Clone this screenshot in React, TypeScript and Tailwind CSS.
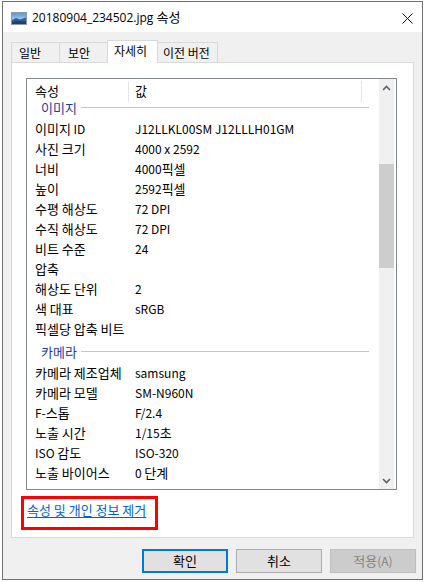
import React from "react";

const FONT = '"Noto Sans CJK KR", sans-serif';

function K({ t }: { t: string }) {
  const parts = t.split(/([\u3131-\u318E\uAC00-\uD7A3]+(?: [\u3131-\u318E\uAC00-\uD7A3]+)*)/);
  return (
    <>
      {parts.map((p, i) =>
        /[\uAC00-\uD7A3\u3131-\u318E]/.test(p) ? (
          <span key={i} className="text-[13px]">
            {p}
          </span>
        ) : (
          <span key={i}>{p}</span>
        )
      )}
    </>
  );
}

type Row = { k: string; v?: string } | { group: string };

const rows: Row[] = [
  { k: "이미지 ID", v: "J12LLKL00SM J12LLLH01GM" },
  { k: "사진 크기", v: "4000 x 2592" },
  { k: "너비", v: "4000픽셀" },
  { k: "높이", v: "2592픽셀" },
  { k: "수평 해상도", v: "72 DPI" },
  { k: "수직 해상도", v: "72 DPI" },
  { k: "비트 수준", v: "24" },
  { k: "압축", v: "" },
  { k: "해상도 단위", v: "2" },
  { k: "색 대표", v: "sRGB" },
  { k: "픽셀당 압축 비트", v: "" },
  { group: "카메라" },
  { k: "카메라 제조업체", v: "samsung" },
  { k: "카메라 모델", v: "SM-N960N" },
  { k: "F-스톱", v: "F/2.4" },
  { k: "노출 시간", v: "1/15초" },
  { k: "ISO 감도", v: "ISO-320" },
  { k: "노출 바이어스", v: "0 단계" },
];

function PhotoIcon() {
  return (
    <svg width="16" height="13" viewBox="0 0 16 13">
      <defs>
        <linearGradient id="sky" x1="0" y1="0" x2="0" y2="1">
          <stop offset="0" stopColor="#4a8fd0" />
          <stop offset="0.6" stopColor="#a9d0ef" />
          <stop offset="1" stopColor="#dfeefa" />
        </linearGradient>
      </defs>
      <rect x="0.5" y="0.5" width="15" height="12" fill="url(#sky)" stroke="#8d9aa8" />
      <path d="M1 8 L5 6 L9 7.5 L15 5.5 L15 12 L1 12 Z" fill="#2e5f96" />
      <path d="M1 10 L6 9 L15 9.5 L15 12 L1 12 Z" fill="#1d3f6e" />
      <rect x="1" y="1" width="14" height="2" fill="#6aa6dc" opacity="0.6" />
    </svg>
  );
}

function Chevron({ up }: { up?: boolean }) {
  return (
    <svg width="9" height="6" viewBox="0 0 9 6">
      <path
        d={up ? "M1 5 L4.5 1.5 L8 5" : "M1 1 L4.5 4.5 L8 1"}
        fill="none"
        stroke="#606060"
        strokeWidth="1.6"
      />
    </svg>
  );
}

export default function App() {
  return (
    <div
      className="w-[424px] h-[582px] bg-white pl-[2px] pt-[1px] overflow-hidden text-[12px] text-black"
      style={{ fontFamily: FONT }}
    >
      <div className="w-[421px] h-[579px] border border-[#6f6f6f] bg-[#f0f0f0] flex flex-col">
        {/* title bar */}
        <div className="h-[30px] bg-white flex items-center shrink-0">
          <div className="ml-[8px] mt-[2px] flex items-center">
            <PhotoIcon />
          </div>
          <div
            className="ml-[5px] text-[12px] leading-[16px]"
            style={{ fontFamily: '"Open Sans", "Noto Sans CJK KR", sans-serif' }}
          >
            20180904_234502.jpg <K t="속성" />
          </div>
          <div className="flex-1" />
          <div className="mr-[9px] mt-[2px]">
            <svg width="11" height="11" viewBox="0 0 11 11">
              <path d="M0.5 0.5 L10.5 10.5 M10.5 0.5 L0.5 10.5" stroke="#111" strokeWidth="1" />
            </svg>
          </div>
        </div>

        {/* tabs */}
        <div className="pt-[8px] pl-[8px] flex items-end h-[30px] shrink-0">
          <div className="w-[48px] h-[20px] border-l border-t border-[#d9d9d9] flex items-center pl-[7px] leading-[16px]">
            일반
          </div>
          <div className="w-[48px] h-[20px] border-l border-t border-[#d9d9d9] flex items-center pl-[8px] leading-[16px]">
            보안
          </div>
          <div className="w-[51px] h-[23px] -mb-[1px] relative z-10 bg-white border-l border-t border-r border-[#d9d9d9] flex items-start pt-[2px] pl-[6px] leading-[16px]">
            자세히
          </div>
          <div className="w-[60px] h-[20px] border-t border-r border-[#d9d9d9] flex items-center pl-[5px] leading-[16px]">
            이전 버전
          </div>
        </div>

        {/* panel */}
        <div className="ml-[8px] w-[403px] h-[476px] bg-white border border-[#d9d9d9] relative shrink-0">
          <div className="ml-[14px] mt-[15px] w-[371px] h-[412px] border border-[#828790] flex">
            {/* content */}
            <div className="flex-1 flex flex-col">
              <div className="h-[24px] flex shrink-0 items-center leading-[16px]">
                <div className="w-[101px] pl-[8px]">
                  <K t="속성" />
                </div>
                <div className="w-px h-[21px] bg-[#e5e5e5]" />
                <div className="w-[232px] pl-[6px]">
                  <K t="값" />
                </div>
                <div className="w-px h-[21px] bg-[#e5e5e5]" />
              </div>
              <div className="flex-1 flex flex-col">
                <div className="h-[16px] flex items-start shrink-0">
                  <div className="pl-[14px] text-[#1e3c9b] leading-[10px]">
                    <K t="이미지" />
                  </div>
                  <div className="flex-1 h-px bg-[#b7c6e8] ml-[4px] mr-[10px] mt-[4px]" />
                </div>
                {rows.map((r, i) =>
                  "group" in r ? (
                    <div key={i} className="h-[24px] flex items-center pt-[1px] shrink-0">
                      <div className="pl-[14px] text-[#1e3c9b] leading-[16px]">
                        <K t={r.group} />
                      </div>
                      <div className="flex-1 h-px bg-[#b7c6e8] ml-[4px] mr-[10px]" />
                    </div>
                  ) : (
                    <div key={i} className="h-[20px] flex items-center shrink-0 leading-[16px]">
                      <div className="w-[102px] pl-[8px] whitespace-nowrap">
                        <K t={r.k} />
                      </div>
                      <div className="pl-[6px] whitespace-nowrap">
                        <K t={r.v || ""} />
                      </div>
                    </div>
                  )
                )}
              </div>
            </div>
            {/* scrollbar */}
            <div className="w-[15px] mr-[2px] bg-[#f0f0f0] flex flex-col shrink-0">
              <div className="h-[17px] flex items-center justify-center">
                <Chevron up />
              </div>
              <div className="flex-1 flex flex-col">
                <div className="h-[68px]" />
                <div className="h-[104px] bg-[#cdcdcd]" />
              </div>
              <div className="h-[17px] flex items-center justify-center">
                <Chevron />
              </div>
            </div>
          </div>

          <div className="ml-[15px] mt-[12px] leading-[16px]">
            <span className="text-[#0066cc] underline underline-offset-[2px]">
              <K t="속성 및 개인 정보 제거" />
            </span>
          </div>

          {/* red annotation */}
          <div className="absolute left-[9px] top-[433px] w-[137px] h-[34px] border-[3px] border-[#ff0000]" />
        </div>

        {/* buttons */}
        <div className="mt-[11px] flex justify-end gap-[8px] pr-[6px]">
          <button className="w-[86px] h-[24px] bg-[#e1e1e1] border-2 border-[#0078d7] flex items-center justify-center leading-[16px]">
            <K t="확인" />
          </button>
          <button className="w-[86px] h-[24px] bg-[#e1e1e1] border border-[#adadad] flex items-center justify-center leading-[16px]">
            <K t="취소" />
          </button>
          <button className="w-[86px] h-[24px] bg-[#cccccc] border border-[#bfbfbf] text-[#838383] flex items-center justify-center leading-[16px]">
            <K t="적용" />
            (A)
          </button>
        </div>
      </div>
    </div>
  );
}
